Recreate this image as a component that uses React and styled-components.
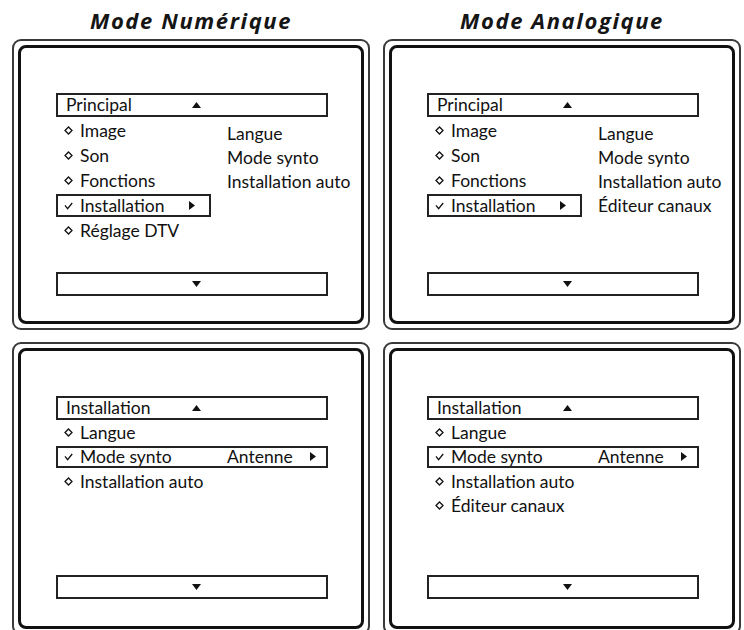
import React from "react";
import styled, { createGlobalStyle, css } from "styled-components";

const GlobalStyle = createGlobalStyle`
  html, body {
    margin: 0;
    padding: 0;
    background: #fff;
  }
  body {
    font-family: Lato, "Liberation Sans", sans-serif;
    color: #111;
  }
`;

const INK = "#111";

const Page = styled.div`
  width: 744px;
  height: 630px;
  overflow: hidden;
  box-sizing: border-box;
  padding-left: 12px;
  display: flex;
  flex-direction: column;
`;

const Columns = styled.div`
  display: grid;
  grid-template-columns: 358px 358px;
  column-gap: 13px;
`;

const TitleBar = styled(Columns)`
  height: 39px;
  flex-shrink: 0;
`;

// bottom row runs past the page edge, as in the original scan
const Board = styled(Columns)`
  grid-template-rows: 291px 293px;
  row-gap: 12px;
`;

const Title = styled.div`
  text-align: center;
  font-family: "Open Sans", Lato, sans-serif;
  font-weight: 700;
  font-style: italic;
  font-size: 22px;
  line-height: 39px;
  padding-top: 1px;
  letter-spacing: 1.6px;
  color: #151515;
`;

const Frame = styled.div`
  box-sizing: border-box;
  height: 100%;
  border: 2px solid #3a3a3a;
  border-radius: 9px;
  padding: 4px;
`;

const Screen = styled.div`
  box-sizing: border-box;
  height: 100%;
  border: 3px solid ${INK};
  border-radius: 8px;
  padding: 45px 0 ${(p) => p.$bottom}px 35px;
  display: flex;
`;

const Menu = styled.div`
  width: 272px;
  display: flex;
  flex-direction: column;
  font-size: 17.5px;
`;

const Bar = styled.div`
  box-sizing: border-box;
  height: 24px;
  border: 2px solid #222;
  display: grid;
  grid-template-columns: 1fr auto 1fr;
  align-items: center;
  padding-left: 8px;
  line-height: 20px;
`;

const FootBar = styled(Bar)`
  margin-top: auto;
`;

const Body = styled.div`
  display: grid;
  grid-template-columns: 171px 1fr;
  padding-top: 1px;
`;

const List = styled.div`
  display: flex;
  flex-direction: column;
`;

const Aside = styled.div`
  display: flex;
  flex-direction: column;
  padding-top: 4px;
  white-space: nowrap;
`;

const AsideItem = styled.div`
  height: 24px;
  line-height: 24px;
`;

const Row = styled.div`
  box-sizing: border-box;
  display: flex;
  align-items: center;
  gap: 7px;
  height: ${(p) => p.$h}px;
  padding-left: 8px;
  white-space: nowrap;
  ${(p) =>
    p.$selected &&
    css`
      border: 2px solid #222;
      height: ${p.$h - 2}px;
      margin: 1px 0;
      padding-left: 6px;
      padding-right: ${p.$full ? 10 : 14}px;
      width: ${p.$full ? "100%" : "155px"};
    `}
`;

const Label = styled.span`
  ${(p) => p.$span && css`width: ${p.$span}px;`}
`;

const Value = styled.span`
  flex: 1;
`;

const Arrow = styled.span`
  margin-left: auto;
  display: flex;
`;

const Diamond = () => (
  <svg width="9" height="9" viewBox="0 0 9 9">
    <path d="M4.5 1 L8 4.5 L4.5 8 L1 4.5 Z" fill="none" stroke={INK} strokeWidth="1.3" />
  </svg>
);

const Check = () => (
  <svg width="9" height="8" viewBox="0 0 9 8">
    <path d="M1 3.4 L3.6 6.6 L8.2 1" fill="none" stroke={INK} strokeWidth="1.3" />
  </svg>
);

const Triangle = ({ dir }) => {
  if (dir === "right")
    return (
      <svg width="6" height="9" viewBox="0 0 6 9">
        <path d="M0 0 L6 4.5 L0 9 Z" fill={INK} />
      </svg>
    );
  return (
    <svg width="9" height="6" viewBox="0 0 9 6">
      <path d={dir === "up" ? "M0 6 L4.5 0 L9 6 Z" : "M0 0 L9 0 L4.5 6 Z"} fill={INK} />
    </svg>
  );
};

const MenuRow = ({ item, h, full }) => (
  <Row $selected={item.selected} $full={full} $h={h}>
    {item.selected ? <Check /> : <Diamond />}
    <Label $span={item.value ? 140 : undefined}>{item.label}</Label>
    {item.value && <Value>{item.value}</Value>}
    {item.selected && (
      <Arrow>
        <Triangle dir="right" />
      </Arrow>
    )}
  </Row>
);

const Panel = ({ panel }) => (
  <Frame>
    <Screen $bottom={panel.aside ? 25 : 27}>
      <Menu>
        <Bar>
          <span>{panel.header}</span>
          <Triangle dir="up" />
        </Bar>
        {panel.aside ? (
          <Body>
            <List>
              {panel.items.map((item) => (
                <MenuRow key={item.label} item={item} h={25} />
              ))}
            </List>
            <Aside>
              {panel.aside.map((a) => (
                <AsideItem key={a}>{a}</AsideItem>
              ))}
            </Aside>
          </Body>
        ) : (
          <List>
            {panel.items.map((item) => (
              <MenuRow key={item.label} item={item} h={24.5} full />
            ))}
          </List>
        )}
        <FootBar>
          <span />
          <Triangle dir="down" />
        </FootBar>
      </Menu>
    </Screen>
  </Frame>
);

const panels = [
  {
    header: "Principal",
    items: [
      { label: "Image" },
      { label: "Son" },
      { label: "Fonctions" },
      { label: "Installation", selected: true },
      { label: "Réglage DTV" },
    ],
    aside: ["Langue", "Mode synto", "Installation auto"],
  },
  {
    header: "Principal",
    items: [
      { label: "Image" },
      { label: "Son" },
      { label: "Fonctions" },
      { label: "Installation", selected: true },
    ],
    aside: ["Langue", "Mode synto", "Installation auto", "Éditeur canaux"],
  },
  {
    header: "Installation",
    items: [
      { label: "Langue" },
      { label: "Mode synto", selected: true, value: "Antenne" },
      { label: "Installation auto" },
    ],
  },
  {
    header: "Installation",
    items: [
      { label: "Langue" },
      { label: "Mode synto", selected: true, value: "Antenne" },
      { label: "Installation auto" },
      { label: "Éditeur canaux" },
    ],
  },
];

export default function App() {
  return (
    <>
      <GlobalStyle />
      <Page>
        <TitleBar>
          <Title>Mode Numérique</Title>
          <Title>Mode Analogique</Title>
        </TitleBar>
        <Board>
          {panels.map((p, i) => (
            <Panel key={i} panel={p} />
          ))}
        </Board>
      </Page>
    </>
  );
}
